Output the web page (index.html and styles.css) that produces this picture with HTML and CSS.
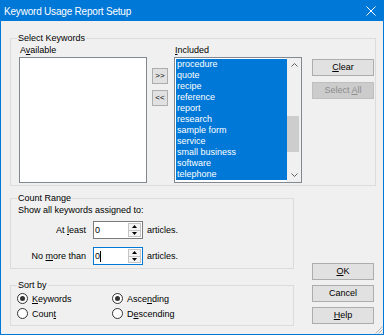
FILE: index.html
```html
<!DOCTYPE html>
<html>
<head>
<meta charset="utf-8">
<title>Keyword Usage Report Setup</title>
<link rel="stylesheet" href="styles.css">
</head>
<body>
<div class="window">
  <div class="titlebar">
    <span class="title">Keyword Usage Report Setup</span>
    <svg class="close" width="10" height="10" viewBox="0 0 10 10"><path d="M0.5 0.5L9.5 9.5M9.5 0.5L0.5 9.5" stroke="#fff" stroke-width="1" fill="none"/></svg>
  </div>
  <div class="body">
    <fieldset class="group group-keywords">
      <legend class="legend legend-keywords">Select Keywords</legend>
      <div class="kw-row">
        <div class="kw-col">
          <div class="kw-label">A<u>v</u>ailable</div>
          <div class="listbox"></div>
        </div>
        <div class="move-col">
          <div class="move">&gt;&gt;</div>
          <div class="move">&lt;&lt;</div>
        </div>
        <div class="kw-col">
          <div class="kw-label"><u>I</u>ncluded</div>
          <div class="listbox listbox-included">
            <div class="items">
              <div class="item">procedure</div>
              <div class="item">quote</div>
              <div class="item">recipe</div>
              <div class="item">reference</div>
              <div class="item">report</div>
              <div class="item">research</div>
              <div class="item">sample form</div>
              <div class="item">service</div>
              <div class="item">small business</div>
              <div class="item">software</div>
              <div class="item">telephone</div>
            </div>
            <div class="vscroll">
              <div class="sb-btn"><svg width="7" height="4" viewBox="0 0 7 4"><path d="M0.5 3.5L3.5 0.5L6.5 3.5" stroke="#606060" stroke-width="1" fill="none"/></svg></div>
              <div class="sb-track"><div class="sb-thumb"></div></div>
              <div class="sb-btn"><svg width="7" height="4" viewBox="0 0 7 4"><path d="M0.5 0.5L3.5 3.5L6.5 0.5" stroke="#606060" stroke-width="1" fill="none"/></svg></div>
            </div>
          </div>
        </div>
        <div class="side-col">
          <div class="btn"><span><u>C</u>lear</span></div>
          <div class="btn btn-disabled"><span>Select <u>A</u>ll</span></div>
        </div>
      </div>
    </fieldset>

    <div class="lower">
      <div class="lower-left">
        <fieldset class="group group-count">
          <legend class="legend legend-count">Count Range</legend>
          <div class="cr-text">Show all keywords assigned to:</div>
          <div class="cr-row cr-row-first">
            <div class="cr-label">At <u>l</u>east</div>
            <div class="spin">
              <div class="spin-text">0</div>
              <div class="spin-btns">
                <div class="spin-btn"><svg width="5" height="3" viewBox="0 0 5 3"><path d="M0 3L2.5 0L5 3Z" fill="#000"/></svg></div>
                <div class="spin-btn"><svg width="5" height="3" viewBox="0 0 5 3"><path d="M0 0L5 0L2.5 3Z" fill="#000"/></svg></div>
              </div>
            </div>
            <div class="cr-unit">articles.</div>
          </div>
          <div class="cr-row cr-row-second">
            <div class="cr-label">No <u>m</u>ore than</div>
            <div class="spin spin-focus">
              <div class="spin-text">0<span class="caret"></span></div>
              <div class="spin-btns">
                <div class="spin-btn"><svg width="5" height="3" viewBox="0 0 5 3"><path d="M0 3L2.5 0L5 3Z" fill="#000"/></svg></div>
                <div class="spin-btn"><svg width="5" height="3" viewBox="0 0 5 3"><path d="M0 0L5 0L2.5 3Z" fill="#000"/></svg></div>
              </div>
            </div>
            <div class="cr-unit">articles.</div>
          </div>
        </fieldset>

        <fieldset class="group group-sort">
          <legend class="legend legend-sort">Sort by</legend>
          <div class="sort-grid">
            <div class="radio"><span class="radio-circle radio-on"></span><span><u>K</u>eywords</span></div>
            <div class="radio"><span class="radio-circle radio-on"></span><span>Asce<u>n</u>ding</span></div>
            <div class="radio"><span class="radio-circle"></span><span>Coun<u>t</u></span></div>
            <div class="radio"><span class="radio-circle"></span><span>D<u>e</u>scending</span></div>
          </div>
        </fieldset>
      </div>
      <div class="lower-right">
        <div class="btn"><span><u>O</u>K</span></div>
        <div class="btn"><span>Cancel</span></div>
        <div class="btn"><span><u>H</u>elp</span></div>
      </div>
    </div>
  </div>
  <svg class="grip" width="9" height="9" viewBox="0 0 9 9">
    <path d="M8.5 1.5L1.5 8.5M8.5 4.5L4.5 8.5M8.5 7.5L7.5 8.5" stroke="#b4b4b4" stroke-width="1" fill="none"/>
  </svg>
</div>
</body>
</html>
```

FILE: styles.css
```css
* {
  box-sizing: border-box;
}

html, body {
  margin: 0;
  padding: 0;
}

body {
  width: 384px;
  height: 335px;
  overflow: hidden;
  background: #f0f0f0;
  font-family: "Liberation Sans", Arial, sans-serif;
  font-size: 9px;
  color: #000;
}

u {
  text-decoration: underline;
  text-underline-offset: 1px;
}

.window {
  position: relative;
  width: 384px;
  height: 335px;
  background: #f0f0f0;
  border: 1px solid #0078d7;
  border-top: 0;
}

.titlebar {
  height: 21px;
  background: #0078d7;
  color: #fff;
  display: flex;
  align-items: center;
  justify-content: space-between;
  padding: 1px 7px 0 3px;
  font-size: 10px;
  letter-spacing: -0.2px;
}

.close {
  display: block;
  margin-top: -1px;
}

.body {
  padding: 12px 7px 0 9px;
}

/* group boxes */
.group {
  margin: 0;
  min-width: 0;
  border: 1px solid #dcdcdc;
}

.legend {
  padding: 0 1px;
  font-size: 9px;
  line-height: 10px;
}

.group-keywords {
  width: 366px;
  padding: 2px 1px 2px 8px;
}

.legend-keywords {
  margin-left: -2px;
}

.kw-row {
  display: flex;
}

.kw-col {
  display: flex;
  flex-direction: column;
  width: 128px;
}

.kw-label {
  line-height: 11px;
  height: 11px;
  margin-bottom: 1px;
  padding-left: 1px;
}

.listbox {
  width: 128px;
  height: 126px;
  background: #fff;
  border: 1px solid #828790;
}

.listbox-included {
  display: flex;
}

.items {
  flex: 1;
  padding: 1px 0 0 1px;
}

.item {
  height: 11px;
  line-height: 11px;
  background: #0078d7;
  color: #fff;
  padding-left: 1px;
  white-space: nowrap;
}

.vscroll {
  width: 14px;
  display: flex;
  flex-direction: column;
  background: #f0f0f0;
}

.sb-btn {
  height: 14px;
  display: flex;
  align-items: center;
  justify-content: center;
}

.sb-btn svg {
  display: block;
}

.sb-track {
  flex: 1;
}

.sb-thumb {
  width: 12px;
  height: 36px;
  margin-top: 44px;
  background: #cdcdcd;
}

.move-col {
  display: flex;
  flex-direction: column;
  gap: 6px;
  margin: 0 6px 0 5px;
  padding-top: 23px;
}

.move {
  width: 16px;
  height: 16px;
  background: #e1e1e1;
  border: 1px solid #adadad;
  display: flex;
  align-items: center;
  justify-content: center;
  font-size: 8px;
  line-height: 10px;
}

.side-col {
  display: flex;
  flex-direction: column;
  gap: 6px;
  margin-left: 10px;
  padding-top: 14px;
}

.btn {
  width: 62px;
  height: 17px;
  background: #e1e1e1;
  border: 1px solid #adadad;
  display: flex;
  align-items: center;
  justify-content: center;
  line-height: 11px;
  white-space: nowrap;
}

.btn-disabled {
  background: #cccccc;
  border-color: #bfbfbf;
  color: #8d8d8d;
}

/* lower part */
.lower {
  display: flex;
  margin-top: 7px;
}

.lower-left {
  width: 284px;
}

.lower-right {
  width: 62px;
  margin-left: 18px;
  display: flex;
  flex-direction: column;
  justify-content: flex-end;
  gap: 5px;
  padding-bottom: 2px;
}

.group-count {
  padding: 2px 0 3px 7px;
}

.legend-count {
  margin-left: -1px;
}

.cr-text {
  line-height: 11px;
  height: 11px;
}

.cr-row {
  display: flex;
  align-items: center;
  height: 18px;
}

.cr-row-first {
  margin-top: 5px;
}

.cr-row-second {
  margin-top: 8px;
}

.cr-label {
  width: 68px;
  margin-right: 7px;
  text-align: right;
  white-space: nowrap;
}

.spin {
  width: 50px;
  height: 18px;
  background: #fff;
  border: 1px solid #7a7a7a;
  display: flex;
}

.spin-focus {
  border-color: #0078d7;
}

.spin-text {
  flex: 1;
  padding-left: 1px;
  line-height: 16px;
  display: flex;
  align-items: center;
}

.caret {
  display: inline-block;
  width: 1px;
  height: 11px;
  background: #000;
}

.spin-btns {
  width: 14px;
  display: flex;
  flex-direction: column;
  padding: 1px 1px 1px 0;
}

.spin-btn {
  flex: 1;
  background: #f4f4f4;
  border: 1px solid #c4c4c4;
  display: flex;
  align-items: center;
  justify-content: center;
}

.spin-btn + .spin-btn {
  border-top: 0;
}

.spin-btn svg {
  display: block;
}

.cr-unit {
  margin-left: 4px;
}

.group-sort {
  margin-top: 11px;
  padding: 1px 0 4px 6px;
}

.sort-grid {
  display: grid;
  grid-template-columns: 95px auto;
  grid-auto-rows: 15px;
}

.radio {
  display: flex;
  align-items: center;
  white-space: nowrap;
}

.radio-circle {
  width: 11px;
  height: 11px;
  border: 1px solid #333;
  border-radius: 50%;
  background: #fff;
  margin-right: 4px;
  display: flex;
  align-items: center;
  justify-content: center;
  flex: none;
}

.radio-on::after {
  content: "";
  width: 5px;
  height: 5px;
  border-radius: 50%;
  background: #333;
}

.grip {
  position: absolute;
  right: 0;
  bottom: 0;
  display: block;
}
```
